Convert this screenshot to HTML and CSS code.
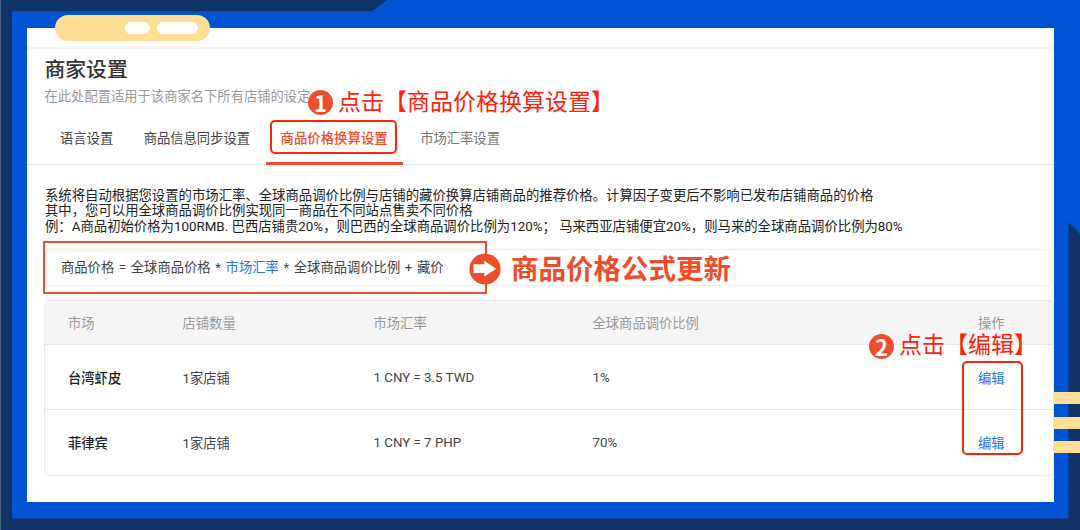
FILE: index.html
```
<!DOCTYPE html>
<html lang="zh-CN">
<head>
  <meta charset="UTF-8">
  <meta name="viewport" content="width=device-width,initial-scale=1.0">
  <title>商家设置</title>
  <link rel="stylesheet" href="styles.css">
</head>
<body>
<div class="poster">
  <svg class="frame" width="1080" height="530" viewBox="0 0 1080 530">
    <path fill="#123367" d="M0 0H387L372 11.2H12V518.5H1068.4V222.3L1080 233.8V530H0Z"/>
    <path fill="#486081" d="M0 0H1V530H0Z"/>
  </svg>
  <div class="tape"><i class="hole hole_s"></i><i class="hole"></i></div>
  <div class="stripes"><i></i><i></i><i></i></div>

  <div class="panel">
    <div class="topbar"></div>
    <header class="head">
      <h1>商家设置</h1>
      <p>在此处配置适用于该商家名下所有店铺的设定</p>
    </header>
    <nav class="tabs">
      <a class="tab">语言设置</a>
      <a class="tab">商品信息同步设置</a>
      <a class="tab active">商品价格换算设置</a>
      <a class="tab last">市场汇率设置</a>
    </nav>
    <div class="intro">
      <p>系统将自动根据您设置的市场汇率、全球商品调价比例与店铺的藏价换算店铺商品的推荐价格。计算因子变更后不影响已发布店铺商品的价格</p>
      <p>其中，您可以用全球商品调价比例实现同一商品在不同站点售卖不同价格</p>
      <p>例：A商品初始价格为100RMB. 巴西店铺贵20%，则巴西的全球商品调价比例为120%； 马来西亚店铺便宜20%，则马来的全球商品调价比例为80%</p>
    </div>
    <div class="formula">商品价格 = 全球商品价格 * <a>市场汇率</a> * 全球商品调价比例 + 藏价</div>
    <div class="table">
      <div class="row thead">
        <span>市场</span><span>店铺数量</span><span>市场汇率</span><span>全球商品调价比例</span><span>操作</span>
      </div>
      <div class="row">
        <b>台湾虾皮</b><span>1家店铺</span><span>1 CNY = 3.5 TWD</span><span>1%</span><a>编辑</a>
      </div>
      <div class="row">
        <b>菲律宾</b><span>1家店铺</span><span>1 CNY = 7 PHP</span><span>70%</span><a>编辑</a>
      </div>
    </div>
  </div>

  <!-- step marks over the page -->
  <div class="mark mark_tab"></div>
  <div class="mark mark_edit"></div>
  <div class="mark mark_formula"></div>
  <div class="note note_1"><span class="num">1</span>点击【商品价格换算设置】</div>
  <div class="note note_2"><span class="num">2</span>点击【编辑】</div>
  <div class="update">
    <svg width="32" height="32" viewBox="0 0 32 32">
      <circle cx="16" cy="16" r="15.6" fill="#ee4d2d"/>
      <path fill="#fff" d="M4.5 11.2H15.3V7.8L27.2 15.7L15.3 23.6V20.1H4.5Z"/>
    </svg>
    <strong>商品价格公式更新</strong>
  </div>
</div>
</body>
</html>
```
FILE: styles.css
```
*{
  box-sizing: border-box;
}
body{
  margin: 0;
  font-family: Roboto, "Noto Sans CJK SC", sans-serif;
  font-size: 13.3px;
  color: #444;
}
h1, p{
  margin: 0;
}
.poster{
  position: relative;
  width: 1080px;
  height: 530px;
  padding: 27.5px 26.4px 27.7px 26.5px;
  background: #0053d2;
  overflow: hidden;
}
.frame{
  position: absolute;
  left: 0;
  top: 0;
}
.tape{
  position: absolute;
  left: 55px;
  top: 15px;
  width: 155px;
  height: 26px;
  padding-right: 12px;
  border-radius: 13px;
  background: #ffdf95;
  display: flex;
  align-items: center;
  justify-content: flex-end;
  gap: 7px;
  z-index: 1;
}
.hole{
  width: 41px;
  height: 12px;
  border-radius: 6px;
  background: #fff;
}
.hole_s{
  width: 25px;
}
.stripes{
  position: absolute;
  right: 0;
  top: 392px;
  width: 26.4px;
  display: grid;
  gap: 12.3px;
}
.stripes i{
  height: 12.3px;
  background: #ffdf95;
}
.panel{
  position: relative;
  height: 474.8px;
  background: #fff;
}
.topbar{
  height: 21.5px;
  border-bottom: 2px solid #f5f5f5;
}
.head{
  height: 63px;
  padding: 7px 0 0 18px;
}
h1{
  font-size: 20.8px;
  line-height: 28px;
  font-weight: 500;
  color: #333;
}
.head p{
  margin-top: 3px;
  line-height: 20px;
  color: #999;
}
.tabs{
  height: 52.5px;
  padding-left: 33.5px;
  display: flex;
  gap: 30.5px;
  border-bottom: 1px solid #e8e8e8;
  line-height: 53px;
}
.tab.active{
  color: #ee4d2d;
  font-size: 13.4px;
  font-weight: 500;
  height: 53px;
  margin: 0 -15px;
  padding: 0 15px;
  border-bottom: 3px solid #ee4d2d;
}
.tab.last{
  color: #777;
  padding-left: 2px;
  line-height: 54px;
}
.intro{
  padding: 23px 0 0 18.5px;
  font-size: 13.37px;
  line-height: 15.6px;
  white-space: nowrap;
  color: #222;
}
.formula{
  margin: 14.5px 1.5px 0 18.5px;
  height: 37px;
  padding-left: 15px;
  border: 1px solid #eee;
  border-radius: 3px;
  line-height: 36px;
  word-spacing: 1.35px;
}
.formula a, .row a{
  color: #2673dd;
}
.table{
  margin: 14.5px 0 0 17.5px;
  border: 1px solid #ebebeb;
  border-radius: 4px;
}
.row{
  height: 65.7px;
  padding-left: 23px;
  display: grid;
  grid-template-columns: 114.5px 191px 219px 385.5px 1fr;
  align-items: center;
  border-top: 1px solid #ebebeb;
}
.row b{
  font-weight: 500;
  color: #222;
}
.thead{
  height: 42.5px;
  border-top: 0;
  background: #f5f5f5;
  color: #999;
}
.mark{
  position: absolute;
  border: 2.5px solid #ff220c;
  border-radius: 5px;
}
.mark_tab{
  left: 270px;
  top: 120px;
  width: 127px;
  height: 34px;
}
.mark_edit{
  left: 962px;
  top: 361px;
  width: 61px;
  height: 94px;
}
.mark_formula{
  left: 43px;
  top: 241px;
  width: 444px;
  height: 53px;
  border: 2px solid #ee4d2d;
  border-radius: 0;
}
.note{
  position: absolute;
  display: flex;
  align-items: center;
  font-size: 23px;
  line-height: 30px;
  color: #ff220c;
  white-space: nowrap;
}
.note_1{
  left: 308px;
  top: 87.5px;
}
.note_2{
  left: 869px;
  top: 331px;
}
.num{
  width: 25px;
  height: 25px;
  margin-right: 5px;
  border-radius: 50%;
  background: #ee4d2d;
  color: #fff;
  font-family: "Noto Sans CJK SC", sans-serif;
  font-size: 22px;
  font-weight: 700;
  line-height: 24px;
  text-align: center;
}
.update{
  position: absolute;
  left: 469px;
  top: 252px;
  display: flex;
  align-items: center;
  gap: 10px;
  color: #ee4d2d;
}
.update strong{
  padding-top: 2px;
  font-size: 27.5px;
  line-height: 32px;
}
```
